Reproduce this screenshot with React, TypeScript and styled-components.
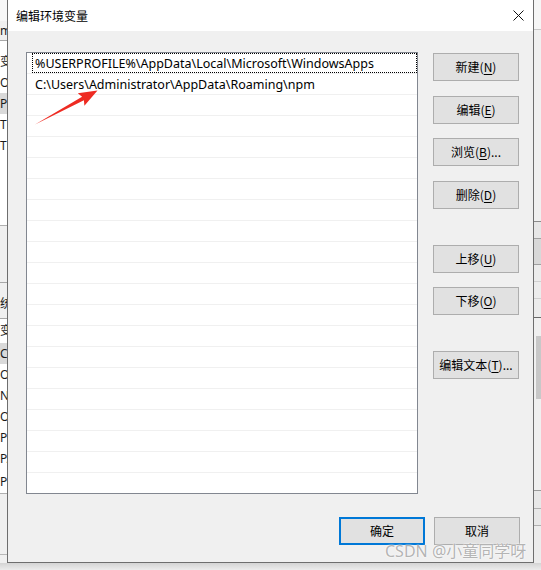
import React from "react";
import styled, { createGlobalStyle } from "styled-components";

const Global = createGlobalStyle`
  html, body { margin: 0; padding: 0; background: #e6e6e6; }
  body { font-family: "Noto Sans", "Noto Sans CJK SC", sans-serif; }
  * { box-sizing: border-box; }
`;

const Screen = styled.div`
  position: relative;
  width: 541px;
  height: 570px;
  overflow: hidden;
  display: flex;
  flex-direction: column;
  background: #e8e8e8;
`;

const MainRow = styled.div`
  display: flex;
  height: 563px;
`;

const ShadowRow = styled.div`
  height: 7px;
  background: linear-gradient(#d4d4d4, #ececec);
`;

/* ---------- background window strips ---------- */
const Strip = styled.div<{ $w: number }>`
  width: ${(p) => p.$w}px;
  flex: none;
  display: flex;
  flex-direction: column;
  overflow: hidden;
  background: #f0f0f0;
`;

const Seg = styled.div<{ $h: number; $bg?: string; $line?: string }>`
  height: ${(p) => p.$h}px;
  flex: none;
  background: ${(p) => p.$bg || "transparent"};
  border-bottom: ${(p) => (p.$line ? `1px solid ${p.$line}` : "none")};
  font-family: "Noto Sans", "Noto Sans CJK SC", sans-serif;
  font-size: 12px;
  line-height: ${(p) => p.$h}px;
  color: #1a1a1a;
  white-space: nowrap;
  position: relative;
`;

const Thumb = styled.div`
  position: absolute;
  left: 2px;
  right: 0;
  top: 18px;
  height: 63px;
  background: #c8c8c8;
`;

/* ---------- dialog ---------- */
const Dialog = styled.div`
  width: 527px;
  flex: none;
  display: flex;
  flex-direction: column;
  border: 1px solid #6e6e6e;
  border-top: none;
  background: #f0f0f0;
  font-family: "Noto Sans CJK SC", "Noto Sans", sans-serif;
`;

const TitleBar = styled.div`
  height: 31px;
  flex: none;
  background: #ffffff;
  display: flex;
  align-items: center;
  justify-content: space-between;
  padding: 0 9px 1px 8px;
`;

const Title = styled.div`
  font-size: 12px;
  color: #000;
`;

const CloseIcon = styled.svg`
  width: 11px;
  height: 11px;
  display: block;
`;

const Body = styled.div`
  flex: 1;
  display: flex;
  flex-direction: column;
  padding: 21px 13px 17px 18px;
`;

const Top = styled.div`
  display: flex;
  gap: 15px;
`;

const ListBox = styled.div`
  width: 392px;
  height: 442px;
  flex: none;
  background: #ffffff;
  border: 1px solid #828790;
  display: flex;
  flex-direction: column;
  overflow: hidden;
`;

const Row = styled.div`
  height: 21px;
  flex: none;
  border-bottom: 1px solid #f0f0f0;
  display: flex;
  padding-left: 5px;
`;

const RowInner = styled.div<{ $focus?: boolean }>`
  flex: 1;
  height: 20px;
  outline: ${(p) => (p.$focus ? "1px dotted #000" : "none")};
  outline-offset: -1px;
  padding-left: 3px;
  font-family: "Noto Sans", "Noto Sans CJK SC", sans-serif;
  font-size: 12.5px;
  line-height: 22px;
  color: #000;
  white-space: nowrap;
`;

const Side = styled.div`
  width: 86px;
  display: flex;
  flex-direction: column;
`;

const Btn = styled.div<{ $mt?: number; $default?: boolean }>`
  width: 86px;
  height: 28px;
  flex: none;
  margin-top: ${(p) => p.$mt ?? 0}px;
  background: #e1e1e1;
  border: ${(p) => (p.$default ? "2px solid #0078d7" : "1px solid #adadad")};
  display: flex;
  align-items: center;
  justify-content: center;
  padding-bottom: 1px;
  font-family: "Noto Sans CJK SC", "Noto Sans", sans-serif;
  font-size: 12px;
  color: #000;
  white-space: nowrap;
`;

const Key = styled.span`
  text-decoration: underline;
  text-underline-offset: 2px;
`;

const Bottom = styled.div`
  margin-top: auto;
  display: flex;
  justify-content: flex-end;
  gap: 9px;
`;

/* ---------- overlays ---------- */
const Arrow = styled.svg`
  position: absolute;
  left: 0;
  top: 0;
  width: 541px;
  height: 570px;
  pointer-events: none;
`;

const Watermark = styled.div`
  position: absolute;
  left: 385px;
  top: 542px;
  font-family: "Noto Sans", "Noto Sans CJK SC", sans-serif;
  font-size: 16px;
  line-height: 19px;
  color: rgba(160, 160, 160, 0.8);
  text-shadow: 0 0 1px #fff, 0 0 2px #fff;
  white-space: nowrap;
  pointer-events: none;
`;

type S = { h: number; t?: string; bg?: string; line?: string; thumb?: boolean };

const leftSegs: S[] = [
  { h: 21, bg: "#f7f7f7" },
  { h: 20, t: "m", bg: "#f0f0f0", line: "#a8a8a8" },
  { h: 10, bg: "#fff" },
  { h: 21, t: "变", bg: "#fff" },
  { h: 21, t: "Or", bg: "#fff" },
  { h: 21, t: "Pa", bg: "#d9d9d9" },
  { h: 21, t: "TE", bg: "#fff" },
  { h: 21, t: "TM", bg: "#fff" },
  { h: 70, bg: "#fff", line: "#b0b0b0" },
  { h: 57, bg: "#f0f0f0", line: "#a8a8a8" },
  { h: 5, bg: "#f0f0f0" },
  { h: 31, t: "统", bg: "#f0f0f0", line: "#a8a8a8" },
  { h: 24, t: "变", bg: "#fff" },
  { h: 21, t: "Co", bg: "#d9d9d9" },
  { h: 21, t: "Or", bg: "#fff" },
  { h: 21, t: "NU", bg: "#fff" },
  { h: 21, t: "OS", bg: "#fff" },
  { h: 21, t: "Pa", bg: "#fff" },
  { h: 21, t: "PA", bg: "#fff" },
  { h: 25, t: "PR", bg: "#fff", line: "#b0b0b0" },
  { h: 61, bg: "#f0f0f0", line: "#b8b8b8" },
  { h: 10, bg: "#f0f0f0" },
];

const rightSegs: S[] = [
  { h: 30, bg: "#f6f6f6", line: "#c8c8c8" },
  { h: 192, bg: "#f0f0f0", line: "#8a8a8a" },
  { h: 17, bg: "#e6e6e6", line: "#a0a0a0" },
  { h: 26, bg: "#d8d8d8", line: "#a0a0a0" },
  { h: 17, bg: "#ececec", line: "#d0d0d0" },
  { h: 17, bg: "#ececec", line: "#d0d0d0" },
  { h: 19, bg: "#ececec", line: "#6a6a6a" },
  { h: 173, bg: "#f0f0f0", line: "#9a9a9a", thumb: true },
  { h: 18, bg: "#e8e8e8", line: "#b0b0b0" },
  { h: 17, bg: "#e8e8e8", line: "#b0b0b0" },
  { h: 40, bg: "#ececec" },
];

const rows = [
  "%USERPROFILE%\\AppData\\Local\\Microsoft\\WindowsApps",
  "C:\\Users\\Administrator\\AppData\\Roaming\\npm",
];

function StripView({ segs, w }: { segs: S[]; w: number }) {
  return (
    <Strip $w={w}>
      {segs.map((s, i) => (
        <Seg key={i} $h={s.h} $bg={s.bg} $line={s.line}>
          {s.t}
          {s.thumb && <Thumb />}
        </Seg>
      ))}
    </Strip>
  );
}

export default function App() {
  const emptyRows = Array.from({ length: 19 });
  return (
    <Screen>
      <Global />
      <MainRow>
        <StripView segs={leftSegs} w={7} />
        <Dialog>
          <TitleBar>
            <Title>编辑环境变量</Title>
            <CloseIcon viewBox="0 0 11 11">
              <path d="M0.5 0.5 L10.5 10.5 M10.5 0.5 L0.5 10.5" stroke="#111" strokeWidth="1" fill="none" />
            </CloseIcon>
          </TitleBar>
          <Body>
            <Top>
              <ListBox>
                {rows.map((r, i) => (
                  <Row key={i}>
                    <RowInner $focus={i === 0}>{r}</RowInner>
                  </Row>
                ))}
                {emptyRows.map((_, i) => (
                  <Row key={"e" + i}>
                    <RowInner />
                  </Row>
                ))}
              </ListBox>
              <Side>
                <Btn $mt={1}>新建(<Key>N</Key>)</Btn>
                <Btn $mt={15}>编辑(<Key>E</Key>)</Btn>
                <Btn $mt={14}>浏览(<Key>B</Key>)...</Btn>
                <Btn $mt={15}>删除(<Key>D</Key>)</Btn>
                <Btn $mt={36}>上移(<Key>U</Key>)</Btn>
                <Btn $mt={14}>下移(<Key>O</Key>)</Btn>
                <Btn $mt={36}>编辑文本(<Key>T</Key>)...</Btn>
              </Side>
            </Top>
            <Bottom>
              <Btn $default>确定</Btn>
              <Btn>取消</Btn>
            </Bottom>
          </Body>
        </Dialog>
        <StripView segs={rightSegs} w={7} />
      </MainRow>
      <ShadowRow />
      <Arrow viewBox="0 0 541 570">
        <polygon
          points="35,124.5 82.1,96.7 77.8,93.3 97.5,90.5 84.4,105.7 83.9,100.3"
          fill="#ee2b22"
        />
      </Arrow>
      <Watermark>CSDN @小童同学呀</Watermark>
    </Screen>
  );
}
